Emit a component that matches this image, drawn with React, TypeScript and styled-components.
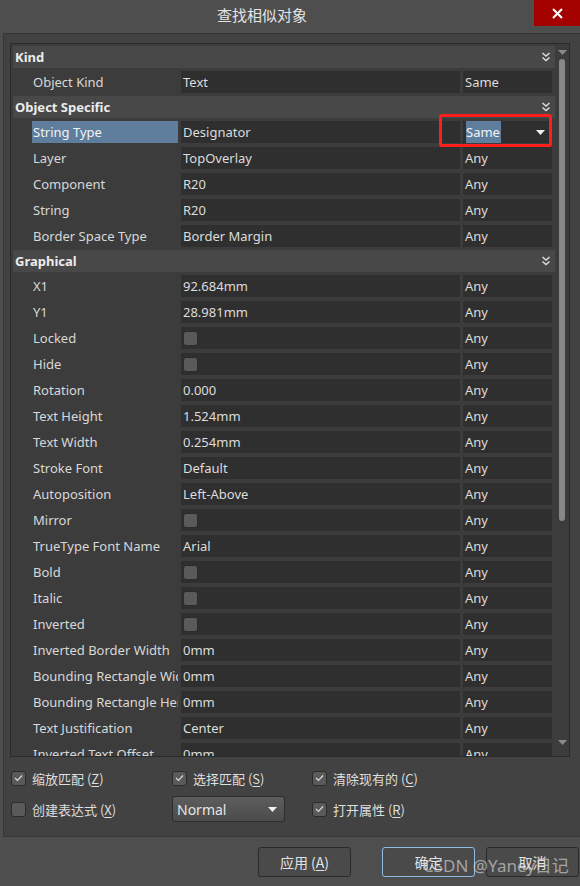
import React from 'react'
import styled, { createGlobalStyle } from 'styled-components'

const GlobalStyle = createGlobalStyle`
  html, body {
    margin: 0;
    padding: 0;
    background: #4e4e4e;
  }
  body {
    font-family: "Noto Sans", "Noto Sans CJK SC", sans-serif;
    color: #dcdcdc;
  }
`

const Window = styled.div`
  position: relative;
  width: 580px;
  height: 886px;
  display: flex;
  flex-direction: column;
  background: #4e4e4e;
  overflow: hidden;
`

const TitleBar = styled.div`
  height: 33px;
  display: flex;
  align-items: flex-start;
  flex-shrink: 0;
`

const Title = styled.div`
  flex: 1;
  text-align: center;
  padding-right: 10px;
  line-height: 30px;
  font-size: 15px;
  color: #e4e4e4;
  font-family: "Noto Sans CJK SC", sans-serif;
`

const CloseButton = styled.div`
  width: 46px;
  height: 26px;
  background: #a30000;
  display: flex;
  align-items: center;
  justify-content: center;
`

const Panel = styled.div`
  margin-left: 3px;
  flex: 1;
  background: #424242;
  border: 1px solid #363636;
  border-right: none;
  padding: 9px 10px 11px 6px;
  display: flex;
  flex-direction: column;
`

const Grid = styled.div`
  height: 712px;
  border: 1px solid #2a2a2a;
  background: #3c3c3c;
  display: flex;
  overflow: hidden;
`

const List = styled.div`
  flex: 1;
  padding: 1px 0 0 1px;
`

const Header = styled.div`
  height: 22px;
  margin: 1px 0 1px 1px;
  background: #484848;
  display: flex;
  align-items: center;
  justify-content: space-between;
  padding: 0 4px 0 2px;
  font-size: 13px;
  font-weight: 700;
  color: #ececec;
`

const Row = styled.div`
  height: 26px;
  display: grid;
  grid-template-columns: 166px 279px 89px;
  column-gap: 3px;
  padding: 2px 2px 2px 0;
  box-sizing: border-box;
  font-size: 13px;
`

const NameCell = styled.div<{ $active?: boolean }>`
  margin-left: 20px;
  padding-left: 1px;
  white-space: nowrap;
  overflow: hidden;
  line-height: 22px;
  background: ${p => (p.$active ? '#5f7e9d' : 'transparent')};
  color: ${p => (p.$active ? '#f2f2f2' : '#d8d8d8')};
`

const ValueCell = styled.div`
  position: relative;
  background: #2f2f2f;
  padding-left: 2px;
  line-height: 22px;
  white-space: nowrap;
  overflow: hidden;
  display: flex;
  align-items: center;
  color: #dcdcdc;
`

const MatchCell = styled(ValueCell)`
  overflow: visible;
  justify-content: space-between;
  padding-right: 7px;
`

const Selected = styled.span`
  background: #5f7e9d;
  color: #f4f4f4;
  padding-right: 1px;
  margin-left: 1px;
`

const RedBox = styled.div`
  position: absolute;
  top: -7px;
  bottom: -4px;
  left: -24px;
  right: 0;
  border: 3px solid #ff1e1e;
  border-radius: 3px;
  pointer-events: none;
`

const Box = styled.span`
  width: 13px;
  height: 13px;
  border: 1px solid #2b2b2b;
  border-radius: 3px;
  background: #5a5a5a;
  display: inline-flex;
  align-items: center;
  justify-content: center;
  flex-shrink: 0;
`

const ScrollBar = styled.div`
  width: 14px;
  display: flex;
  flex-direction: column;
  align-items: center;
  padding-top: 6px;
`

const Thumb = styled.div`
  margin-top: 4px;
  width: 6px;
  height: 462px;
  border-radius: 3px;
  background: #888888;
`

const ScrollSpacer = styled.div`
  flex: 1;
`

const Options = styled.div`
  display: grid;
  grid-template-columns: 161px 140px 1fr;
  grid-template-rows: 26px 26px;
  row-gap: 5px;
  margin-top: 8px;
  padding-left: 1px;
  align-items: center;
`

const Option = styled.label`
  display: flex;
  align-items: center;
  gap: 6px;
  font-size: 13px;
  color: #dedede;
  font-family: "Noto Sans CJK SC", sans-serif;
  white-space: nowrap;
`

const Key = styled.span`
  text-decoration: underline;
  text-underline-offset: 2px;
`

const Select = styled.div`
  width: 100px;
  height: 24px;
  border: 1px solid #2c2c2c;
  border-radius: 3px;
  background: linear-gradient(#5d5d5d, #4b4b4b);
  display: flex;
  align-items: center;
  justify-content: space-between;
  padding: 0 7px 0 4px;
  box-sizing: content-box;
  font-size: 14px;
  color: #e6e6e6;
`

const Footer = styled.div`
  height: 49px;
  display: flex;
  justify-content: flex-end;
  align-items: flex-start;
  padding: 10px 1px 0 0;
  box-sizing: border-box;
  flex-shrink: 0;
`

const Button = styled.div<{ $focus?: boolean; $gap?: number }>`
  width: 91px;
  height: 28px;
  margin-left: ${p => p.$gap ?? 11}px;
  border: 1px solid ${p => (p.$focus ? '#8fbbe6' : '#2a2a2a')};
  border-radius: 3px;
  background: #4a4a4a;
  display: flex;
  align-items: center;
  justify-content: center;
  font-size: 14px;
  color: #e2e2e2;
  font-family: "Noto Sans CJK SC", sans-serif;
  white-space: nowrap;
`

const Watermark = styled.div`
  position: absolute;
  left: 423px;
  top: 852px;
  font-size: 17px;
  white-space: nowrap;
  color: rgba(225, 225, 225, 0.6);
  font-family: "Noto Sans", "Noto Sans CJK SC", sans-serif;
  pointer-events: none;
`

const Chevrons = () => (
  <svg width="10" height="10" viewBox="0 0 10 10">
    <polyline points="1.5,1 5,4 8.5,1" fill="none" stroke="#e0e0e0" strokeWidth="1.4" />
    <polyline points="1.5,5.5 5,8.5 8.5,5.5" fill="none" stroke="#e0e0e0" strokeWidth="1.4" />
  </svg>
)

const Caret = ({ color = '#f0f0f0' }: { color?: string }) => (
  <svg width="9" height="5" viewBox="0 0 9 5">
    <polygon points="0,0 9,0 4.5,5" fill={color} />
  </svg>
)

const Check = () => (
  <svg width="9" height="8" viewBox="0 0 9 8">
    <polyline points="1,4 3.5,6.5 8,1.5" fill="none" stroke="#d8d8d8" strokeWidth="1.2" />
  </svg>
)

type Prop = { name: string; value?: string; box?: boolean; match?: string }

const sections: { title: string; rows: Prop[] }[] = [
  { title: 'Kind', rows: [{ name: 'Object Kind', value: 'Text', match: 'Same' }] },
  {
    title: 'Object Specific',
    rows: [
      { name: 'String Type', value: 'Designator', match: 'Same' },
      { name: 'Layer', value: 'TopOverlay' },
      { name: 'Component', value: 'R20' },
      { name: 'String', value: 'R20' },
      { name: 'Border Space Type', value: 'Border Margin' },
    ],
  },
  {
    title: 'Graphical',
    rows: [
      { name: 'X1', value: '92.684mm' },
      { name: 'Y1', value: '28.981mm' },
      { name: 'Locked', box: true },
      { name: 'Hide', box: true },
      { name: 'Rotation', value: '0.000' },
      { name: 'Text Height', value: '1.524mm' },
      { name: 'Text Width', value: '0.254mm' },
      { name: 'Stroke Font', value: 'Default' },
      { name: 'Autoposition', value: 'Left-Above' },
      { name: 'Mirror', box: true },
      { name: 'TrueType Font Name', value: 'Arial' },
      { name: 'Bold', box: true },
      { name: 'Italic', box: true },
      { name: 'Inverted', box: true },
      { name: 'Inverted Border Width', value: '0mm' },
      { name: 'Bounding Rectangle Width', value: '0mm' },
      { name: 'Bounding Rectangle Height', value: '0mm' },
      { name: 'Text Justification', value: 'Center' },
      { name: 'Inverted Text Offset', value: '0mm' },
    ],
  },
]

function PropRow({ row }: { row: Prop }) {
  const active = row.name === 'String Type'
  return (
    <Row>
      <NameCell $active={active}>{row.name}</NameCell>
      <ValueCell>{row.box ? <Box /> : row.value}</ValueCell>
      {active ? (
        <MatchCell>
          <Selected>Same</Selected>
          <Caret />
          <RedBox />
        </MatchCell>
      ) : (
        <ValueCell>{row.match ?? 'Any'}</ValueCell>
      )}
    </Row>
  )
}

export default function App() {
  return (
    <>
      <GlobalStyle />
      <Window>
        <TitleBar>
          <Title>查找相似对象</Title>
          <CloseButton>
            <svg width="11" height="11" viewBox="0 0 11 11">
              <path d="M1 1 L10 10 M10 1 L1 10" stroke="#ffffff" strokeWidth="2" />
            </svg>
          </CloseButton>
        </TitleBar>

        <Panel>
          <Grid>
            <List>
              {sections.map(s => (
                <React.Fragment key={s.title}>
                  <Header>
                    {s.title}
                    <Chevrons />
                  </Header>
                  {s.rows.map(r => (
                    <PropRow key={r.name} row={r} />
                  ))}
                </React.Fragment>
              ))}
            </List>
            <ScrollBar>
              <Caret color="#8a8a8a" />
              <Thumb />
              <ScrollSpacer />
              <div style={{ marginBottom: 6 }}>
                <Caret color="#8a8a8a" />
              </div>
            </ScrollBar>
          </Grid>

          <Options>
            <Option><Box><Check /></Box><span>缩放匹配 (<Key>Z</Key>)</span></Option>
            <Option><Box><Check /></Box><span>选择匹配 (<Key>S</Key>)</span></Option>
            <Option><Box><Check /></Box><span>清除现有的 (<Key>C</Key>)</span></Option>
            <Option><Box /><span>创建表达式 (<Key>X</Key>)</span></Option>
            <Select>
              Normal
              <Caret />
            </Select>
            <Option><Box><Check /></Box><span>打开属性 (<Key>R</Key>)</span></Option>
          </Options>
        </Panel>

        <Footer>
          <Button $gap={0}><span>应用 (<Key>A</Key>)</span></Button>
          <Button $focus $gap={31}>确定</Button>
          <Button>取消</Button>
        </Footer>
        <Watermark>CSDN @Yaney日记</Watermark>
      </Window>
    </>
  )
}
